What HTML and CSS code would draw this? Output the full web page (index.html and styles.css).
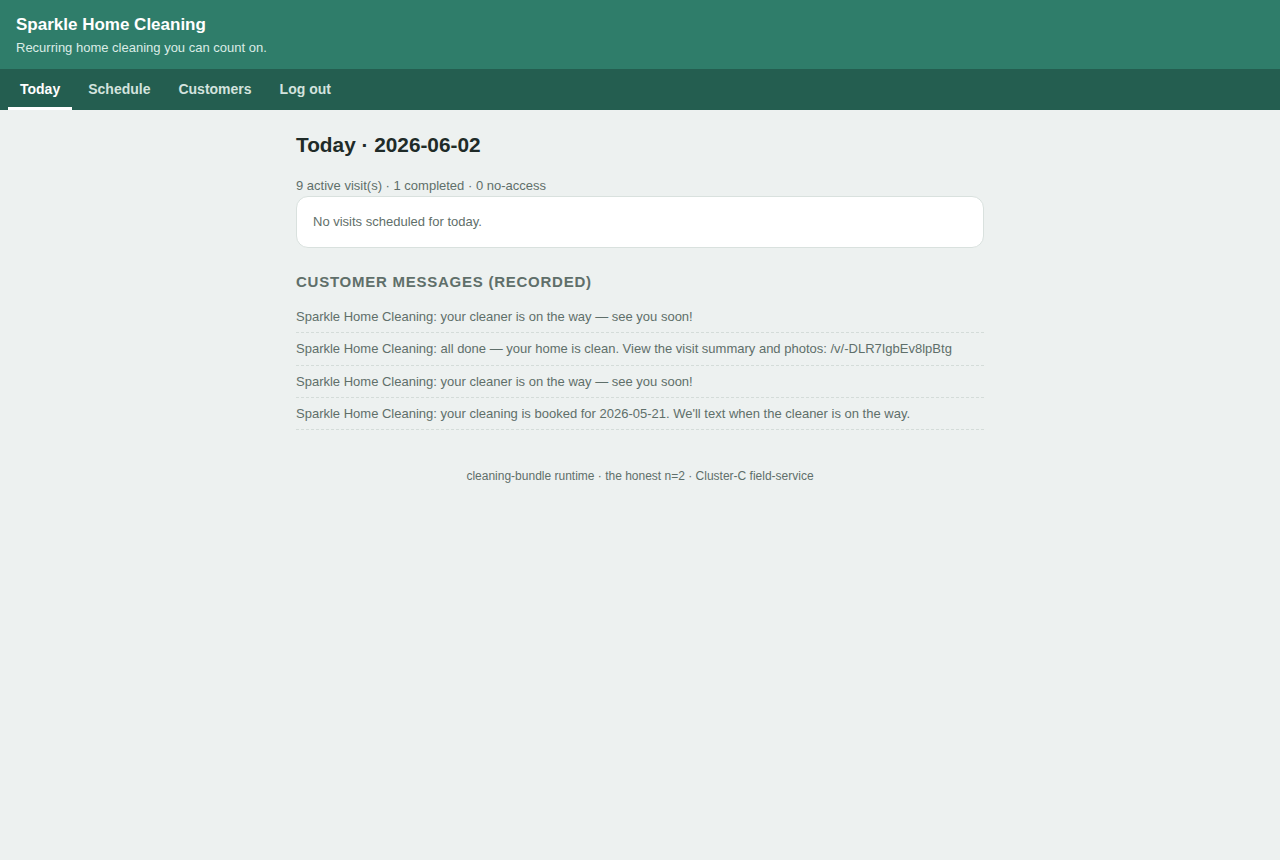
FILE: index.html
```html
<!DOCTYPE html>
<html lang="en">
<head>
    <meta charset="UTF-8">
    <meta name="viewport" content="width=device-width, initial-scale=1.0">
    <title>Today · Sparkle Home Cleaning</title>
    <link rel="stylesheet" href="styles.css">
</head>
<body>
    <header class="site-header">
        <div class="brand">Sparkle Home Cleaning</div>
        <div class="tagline">Recurring home cleaning you can count on.</div>
    </header>
    <nav class="site-nav">
        <a href="#" class="active">Today</a>
        <a href="#">Schedule</a>
        <a href="#">Customers</a>
        <a href="#">Log out</a>
    </nav>
    <main class="container">
        <h1>Today · 2026-06-02</h1>
        <p class="stats">9 active visit(s) · 1 completed · 0 no-access</p>
        <div class="card">No visits scheduled for today.</div>

        <h2>Customer messages (recorded)</h2>
        <ul class="messages">
            <li>Sparkle Home Cleaning: your cleaner is on the way — see you soon!</li>
            <li>Sparkle Home Cleaning: all done — your home is clean. View the visit summary and photos: /v/-DLR7IgbEv8lpBtg</li>
            <li>Sparkle Home Cleaning: your cleaner is on the way — see you soon!</li>
            <li>Sparkle Home Cleaning: your cleaning is booked for 2026-05-21. We'll text when the cleaner is on the way.</li>
        </ul>
    </main>
    <footer class="site-footer">cleaning-bundle runtime · the honest n=2 · Cluster-C field-service</footer>
</body>
</html>
```

FILE: styles.css
```css
/* page */
body {
    font-family: "Liberation Sans", Arial, sans-serif;
    background-color: #edf1f0;
    color: #1f2b28;
    margin: 0;
    padding: 0;
}

.site-header {
    background: #2f7d6a;
    color: #fff;
    padding: 15px 16px 13px;
}

.brand {
    font-size: 17px;
    font-weight: bold;
    line-height: 20px;
}

.tagline {
    font-size: 13px;
    line-height: 16px;
    margin-top: 5px;
    color: #dbece6;
}

.site-nav {
    background: #245e50;
    padding: 0 8px;
    display: flex;
    gap: 4px;
}

.site-nav a {
    color: #d3e3de;
    text-decoration: none;
    font-size: 14px;
    font-weight: bold;
    line-height: 17px;
    padding: 12px 12px 9px;
    border-bottom: 3px solid transparent;
}

.site-nav a.active {
    color: #fff;
    border-bottom-color: #fff;
}

.container {
    max-width: 688px;
    margin: 0 auto;
    padding: 23px 16px 0;
}

h1 {
    font-size: 20.8px;
    line-height: 24px;
    margin: 0 0 21px;
    color: #1f2b28;
}

.stats {
    font-size: 13px;
    line-height: 16px;
    color: #5f6f6a;
    margin: 0 0 2px;
}

.card {
    background: #fff;
    border: 1px solid #d9e1de;
    border-radius: 12px;
    padding: 17px 16px;
    font-size: 13px;
    line-height: 16px;
    color: #5f6f6a;
}

h2 {
    font-size: 15px;
    line-height: 18px;
    letter-spacing: 0.75px;
    text-transform: uppercase;
    color: #5f6f6a;
    margin: 25px 0 10px;
}

.messages {
    list-style: none;
    margin: 0;
    padding: 0;
}

.messages li {
    font-size: 13px;
    line-height: 15.3px;
    color: #5f6f6a;
    padding: 8px 0;
    border-bottom: 1px dashed #d4dcd9;
}

.site-footer {
    text-align: center;
    font-size: 12px;
    line-height: 14px;
    color: #5f6f6a;
    padding: 39px 16px 24px;
}
```
